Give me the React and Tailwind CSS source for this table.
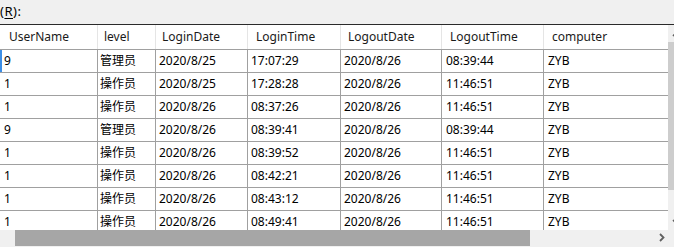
import React from "react";

const cols = [
  { name: "UserName", w: "w-[98px]", hp: "pl-[9px]", cp: "pl-[4px]" },
  { name: "level", w: "w-[58px]", hp: "pl-[6px]", cp: "pl-[2px]" },
  { name: "LoginDate", w: "w-[92px]", hp: "pl-[6px]", cp: "pl-[3px]" },
  { name: "LoginTime", w: "w-[93px]", hp: "pl-[8px]", cp: "pl-[3px]" },
  { name: "LogoutDate", w: "w-[101px]", hp: "pl-[7px]", cp: "pl-[3px]" },
  { name: "LogoutTime", w: "w-[102px]", hp: "pl-[8px]", cp: "pl-[4px]" },
  { name: "computer", w: "w-[124px]", hp: "pl-[8px]", cp: "pl-[4px]" },
];

const rows = [
  ["9", "管理员", "2020/8/25", "17:07:29", "2020/8/26", "08:39:44", "ZYB"],
  ["1", "操作员", "2020/8/25", "17:28:28", "2020/8/26", "11:46:51", "ZYB"],
  ["1", "操作员", "2020/8/26", "08:37:26", "2020/8/26", "11:46:51", "ZYB"],
  ["9", "管理员", "2020/8/26", "08:39:41", "2020/8/26", "08:39:44", "ZYB"],
  ["1", "操作员", "2020/8/26", "08:39:52", "2020/8/26", "11:46:51", "ZYB"],
  ["1", "操作员", "2020/8/26", "08:42:21", "2020/8/26", "11:46:51", "ZYB"],
  ["1", "操作员", "2020/8/26", "08:43:12", "2020/8/26", "11:46:51", "ZYB"],
  ["1", "操作员", "2020/8/26", "08:49:41", "2020/8/26", "11:46:51", "ZYB"],
];

export default function App() {
  return (
    <div className="w-[674px] h-[247px] overflow-hidden bg-[#f0f0f0] flex flex-col font-['Noto_Sans','Noto_Sans_CJK_SC',sans-serif] text-[12px] text-black">
      {/* top label strip */}
      <div className="h-[24px] shrink-0 flex items-start pt-[3px] leading-[16px] text-[13px]">
        <span className="tracking-[0.5px]">
          (<span className="underline underline-offset-2">R</span>):
        </span>
      </div>
      <div className="h-[1px] shrink-0 bg-[#2a2a2a]" />
      <div className="flex h-[205px] shrink-0">
        {/* grid */}
        <div className="w-[668px] shrink-0 bg-white flex flex-col overflow-hidden">
          <div className="flex h-[25px] shrink-0 border-b border-[#a0a0a0] text-[#1a1a1a]">
            {cols.map((c, i) => (
              <div
                key={c.name}
                className={`${c.w} ${c.hp} shrink-0 h-full flex items-center ${i < 6 ? "border-r border-[#e5e5e5]" : ""}`}
              >
                {c.name}
              </div>
            ))}
          </div>
          {rows.map((r, ri) => (
            <div key={ri} className="flex h-[23px] shrink-0 border-b border-[#a0a0a0] relative">
              {ri === 0 && <div className="absolute left-0 top-0 w-[2px] h-full bg-[#3c8ee6]" />}
              {r.map((v, ci) => (
                <div
                  key={ci}
                  className={`${cols[ci].w} ${cols[ci].cp} shrink-0 h-full flex items-center ${ci < 6 ? "border-r border-[#a0a0a0]" : ""}`}
                >
                  {v}
                </div>
              ))}
            </div>
          ))}
        </div>
        {/* vertical scrollbar (partially visible) */}
        <div className="w-[17px] shrink-0 flex flex-col bg-[#f0f0f0]">
          <div className="h-[17px] shrink-0 flex items-center justify-center">
            <svg width="9" height="6" viewBox="0 0 9 6">
              <path d="M1 5 L4.5 1.5 L8 5" stroke="#606060" strokeWidth="1.6" fill="none" />
            </svg>
          </div>
          <div className="h-[148px] shrink-0 bg-[#cdcdcd]" />
          <div className="flex-1" />
          <div className="h-[17px] shrink-0 flex items-center justify-center">
            <svg width="9" height="6" viewBox="0 0 9 6">
              <path d="M1 1 L4.5 4.5 L8 1" stroke="#606060" strokeWidth="1.6" fill="none" />
            </svg>
          </div>
        </div>
      </div>
      {/* horizontal scrollbar */}
      <div className="h-[17px] shrink-0 flex items-start w-[668px]">
        <div className="w-[15px] shrink-0" />
        <div className="w-[515px] h-[16px] shrink-0 bg-[#a6a6a6]" />
        <div className="flex-1" />
        <div className="w-[17px] h-[17px] shrink-0 flex items-center justify-center -mr-[2px] mt-[-1px]">
          <svg width="6" height="9" viewBox="0 0 6 9">
            <path d="M1 1 L4.5 4.5 L1 8" stroke="#606060" strokeWidth="1.8" fill="none" />
          </svg>
        </div>
      </div>
    </div>
  );
}
